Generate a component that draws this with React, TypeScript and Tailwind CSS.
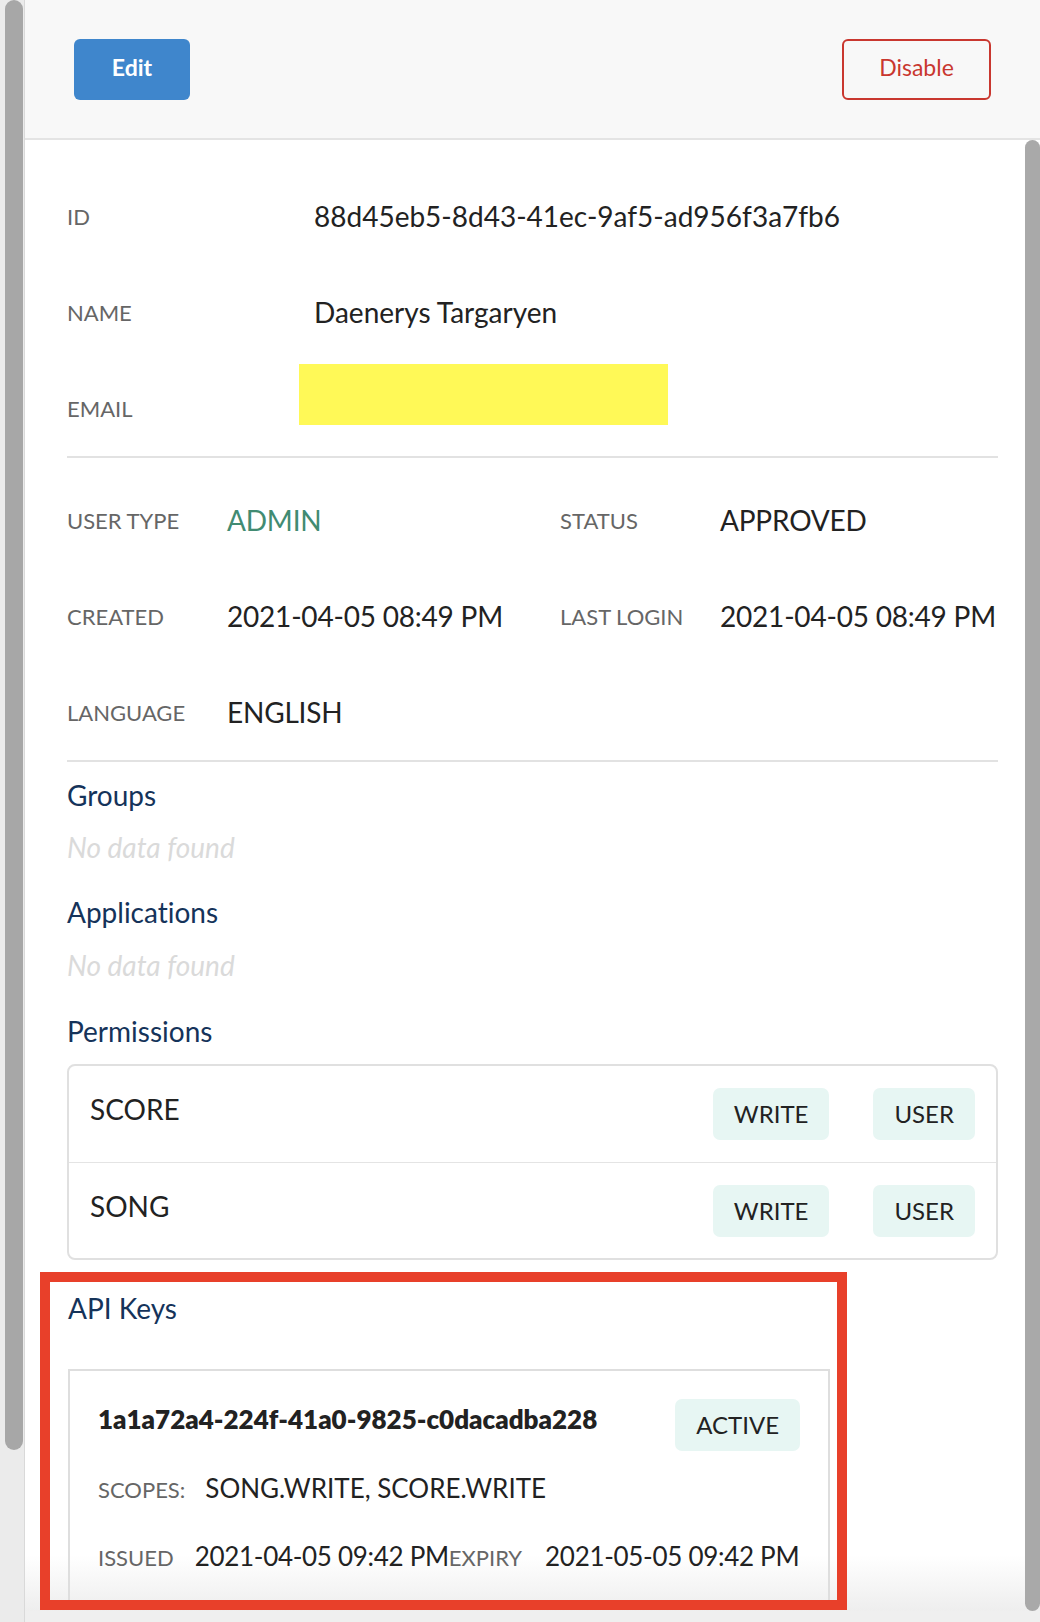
const details = [
  { label: "ID", value: "88d45eb5-8d43-41ec-9af5-ad956f3a7fb6" },
  { label: "Name", value: "Daenerys Targaryen" },
]

const meta = [
  [
    { label: "User Type", value: "ADMIN", accent: true },
    { label: "Status", value: "APPROVED" },
  ],
  [
    { label: "Created", value: "2021-04-05 08:49 PM" },
    { label: "Last Login", value: "2021-04-05 08:49 PM" },
  ],
  [{ label: "Language", value: "ENGLISH" }],
]

const permissions = [
  { id: "score", name: "SCORE", tags: ["WRITE", "USER"] },
  { id: "song", name: "SONG", tags: ["WRITE", "USER"] },
]

function Badge({ children }: { children: React.ReactNode }) {
  return (
    <span className="flex h-[52px] shrink-0 items-center rounded-[7px] bg-[#e7f6f3] px-[21px] text-[24px] leading-none text-[#222]">
      {children}
    </span>
  )
}

function SectionTitle({ children, className = "" }: { children: React.ReactNode; className?: string }) {
  return <h3 className={`text-[28px] leading-[34px] text-[#15335a] ${className}`}>{children}</h3>
}

function Empty({ className = "" }: { className?: string }) {
  return <p className={`text-[28px] italic leading-[34px] text-[#dadada] ${className}`}>No data found</p>
}

export default function App() {
  return (
    <div className="flex h-[1622px] w-[1040px] overflow-hidden bg-white font-['Lato',sans-serif] [font-variant-ligatures:none]">
      {/* outer scrollbar */}
      <div className="flex w-[25px] shrink-0 flex-col border-r border-[#d9d9d9] bg-[#ebebeb] pl-[5px] pr-[1px]">
        <div className="h-[1450px] rounded-full bg-[#a7a7a7]" />
      </div>

      <div className="flex min-w-0 flex-1 flex-col">
        {/* Toolbar */}
        <header className="flex h-[140px] shrink-0 items-center justify-between border-b-2 border-[#e4e4e4] bg-[#f8f8f8] px-[49px]">
          <button className="h-[61px] w-[116px] rounded-md bg-[#3f86cc] pb-[3px] text-[23px] font-bold text-white">
            Edit
          </button>
          <button className="h-[61px] w-[149px] rounded-md border-2 border-[#c9372f] pb-[3px] text-[23px] text-[#c9372f]">
            Disable
          </button>
        </header>

        <div className="flex min-h-0 flex-1 bg-[linear-gradient(180deg,#ffffff_1415px,#eeeeee_1471px)]">
          <main className="min-w-0 flex-1 overflow-hidden pl-[42px] pr-[27px]">
            {/* Identity */}
            <div className="pt-[28px]">
              {details.map((row) => (
                <div key={row.label} className="flex h-[96px] items-center">
                  <span className="w-[247px] shrink-0 text-[22px] uppercase text-[#666]">{row.label}</span>
                  <span className="whitespace-nowrap text-[28px] text-[#222]">{row.value}</span>
                </div>
              ))}
              <div className="flex h-[96px] items-center">
                <span className="w-[247px] shrink-0 text-[22px] uppercase text-[#666]">Email</span>
                <span className="-ml-[15px] mb-[27px] h-[61px] w-[369px] bg-[#fff957]" />
              </div>
            </div>
            <div className="h-[2px] bg-[#e2e2e2]" />

            {/* Meta */}
            <div className="pt-[14px]">
              {meta.map((row, i) => (
                <div key={i} className="flex h-[96px] items-center">
                  {row.map((cell, j) => (
                    <div key={cell.label} className={`flex items-center ${j === 0 ? "w-[493px] shrink-0" : ""}`}>
                      <span className="w-[160px] shrink-0 text-[22px] uppercase text-[#666]">{cell.label}</span>
                      <span
                        className={`whitespace-nowrap text-[28px] tracking-[-0.2px] ${cell.accent ? "text-[#418b72]" : "text-[#222]"}`}
                      >
                        {cell.value}
                      </span>
                    </div>
                  ))}
                </div>
              ))}
            </div>
            <div className="h-[2px] bg-[#e2e2e2]" />

            {/* Lists */}
            <SectionTitle className="mt-[16px]">Groups</SectionTitle>
            <Empty className="mt-[18px]" />
            <SectionTitle className="mt-[31px]">Applications</SectionTitle>
            <Empty className="mt-[19px]" />
            <SectionTitle className="mt-[32px]">Permissions</SectionTitle>

            <div className="mt-[16px] rounded-lg border-2 border-[#e0e0e0]">
              {permissions.map((perm, i) => (
                <div
                  key={perm.id}
                  className={`flex h-[96px] items-center px-[21px] ${i > 0 ? "border-t border-[#e4e4e4]" : ""}`}
                >
                  <span className="mb-[10px] flex-1 text-[28px] text-[#222]">{perm.name}</span>
                  <div className="flex gap-[44px]">
                    {perm.tags.map((tag) => (
                      <Badge key={tag}>{tag}</Badge>
                    ))}
                  </div>
                </div>
              ))}
            </div>

            {/* API keys (highlighted) */}
            <section className="-ml-[27px] mt-[12px] h-[338px] w-[807px] overflow-hidden border-[10px] border-[#e8402a] pl-[18px] pr-[7px] pt-[9px]">
              <SectionTitle>API Keys</SectionTitle>
              <div className="mt-[44px] w-[762px] border-2 border-[#dedede] px-[28px] pb-[80px] pt-[28px]">
                <div className="flex items-start justify-between">
                  <span className="mt-[5px] whitespace-nowrap text-[26px] font-extrabold leading-[31px] text-[#222]">
                    1a1a72a4-224f-41a0-9825-c0dacadba228
                  </span>
                  <Badge>ACTIVE</Badge>
                </div>
                <div className="mt-[22px] flex items-baseline whitespace-nowrap">
                  <span className="mr-[20px] text-[22px] text-[#666]">SCOPES:</span>
                  <span className="text-[26px] leading-[31px] text-[#222]">SONG.WRITE, SCORE.WRITE</span>
                </div>
                <div className="mt-[35px] flex items-baseline whitespace-nowrap">
                  <span className="mr-[21px] text-[22px] text-[#666]">ISSUED</span>
                  <span className="text-[26px] leading-[31px] tracking-[-0.3px] text-[#222]">2021-04-05 09:42 PM</span>
                  <span className="mr-[23px] text-[22px] text-[#666]">EXPIRY</span>
                  <span className="text-[26px] leading-[31px] tracking-[-0.3px] text-[#222]">2021-05-05 09:42 PM</span>
                </div>
              </div>
            </section>
          </main>

          {/* inner scrollbar */}
          <div className="w-[15px] shrink-0 rounded-full bg-[#a9a9a9]" />
        </div>
        <div className="h-[11px] shrink-0 bg-[#efefef]" />
      </div>
    </div>
  )
}
